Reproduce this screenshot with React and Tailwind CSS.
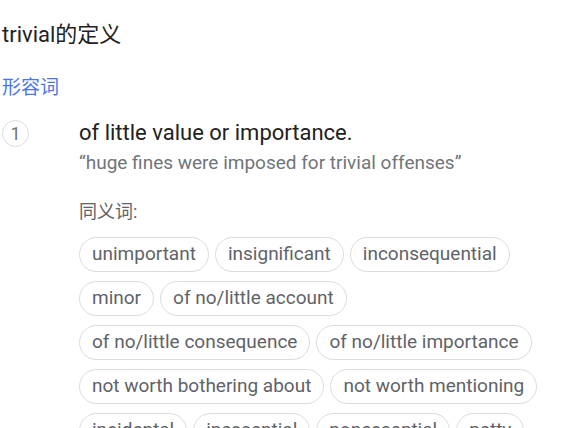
import React from "react";

const synonyms = [
  "unimportant",
  "insignificant",
  "inconsequential",
  "minor",
  "of no/little account",
  "of no/little consequence",
  "of no/little importance",
  "not worth bothering about",
  "not worth mentioning",
  "incidental",
  "inessential",
  "nonessential",
  "petty",
];

const App = () => {
  return (
    <div
      className="h-[428px] w-[585px] overflow-hidden bg-white pl-[2px] pr-[20px]"
      style={{ fontFamily: "Roboto, 'Noto Sans CJK SC', sans-serif" }}
    >
      {/* Title */}
      <h1 className="pt-[21px] text-[22px] leading-[28px] text-[#222]">trivial的定义</h1>

      {/* Part of speech */}
      <div className="mt-[27px] text-[19px] leading-[24px] text-[#4a74e8]">形容词</div>

      {/* Sense 1 */}
      <div className="mt-[20px] flex">
        <div className="w-[77px] shrink-0">
          <div className="flex h-[27px] w-[27px] items-center justify-center rounded-full border border-[#dadce0] text-[18px] text-[#70757a]">
            1
          </div>
        </div>
        <div className="flex-1">
          <p className="text-[22px] leading-[26px] text-[#222]">of little value or importance.</p>
          <p className="mt-[5px] text-[19px] leading-[24px] text-[#70757a]">
            “huge fines were imposed for trivial offenses”
          </p>
          <div className="mt-[25px] text-[18px] leading-[24px] text-[#5f6368]">同义词:</div>
          <div className="mt-[13px] flex flex-wrap gap-x-[6px] gap-y-[9px]">
            {synonyms.map((s, i) => (
              <span
                key={i}
                className="flex h-[35px] items-center rounded-full border border-[#dadce0] px-[12px] text-[19px] text-[#5f6368]"
              >
                {s}
              </span>
            ))}
          </div>
        </div>
      </div>
    </div>
  );
};

export default App;
